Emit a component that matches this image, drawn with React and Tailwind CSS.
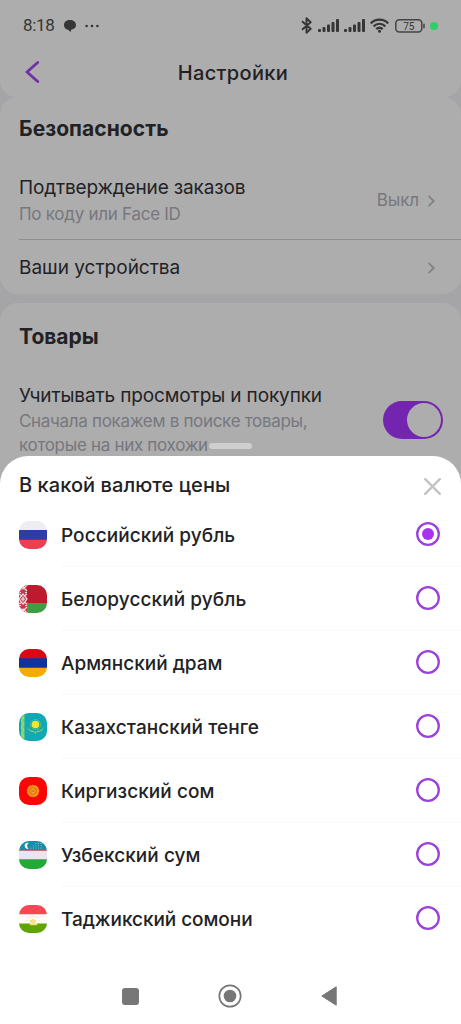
import React from 'react';

function StatusBar() {
  return (
    <div className="flex h-[51px] items-center pl-[23px] pr-[23px] text-[#363636]">
      <span className="w-[41px] pt-px font-['Roboto',sans-serif] text-[17px] tracking-[-0.3px]">8:18</span>
      <svg className="h-3 w-3" viewBox="0 0 12 12" fill="currentColor">
        <path d="M6 0C2.500 0 0 2 0 4.900c0 2.600 1.600 4.300 4 4.800L6.600 12l.8-2.600C10.400 9 12 7.400 12 5 12 2 9.400 0 6 0z" />
      </svg>
      <svg className="ml-[9px] h-3 w-[14px]" viewBox="0 0 14 12" fill="currentColor">
        <circle cx="1.600" cy="6" r="1.300" /><circle cx="7" cy="6" r="1.300" /><circle cx="12.400" cy="6" r="1.300" />
      </svg>
      <svg className="ml-auto h-[17px] w-[11px]" viewBox="0 0 11 17" fill="none" stroke="currentColor" strokeWidth="1.900">
        <path d="M1 4.300l8.700 7.500-4.200 4V1.200l4.200 4L1 12.700" strokeLinejoin="round" />
      </svg>
      <Signal className="ml-[6px]" />
      <Signal className="ml-[5px]" />
      <svg className="ml-[5px] h-[15px] w-[19px]" viewBox="0 0 19 15" fill="none" stroke="currentColor" strokeWidth="2.300">
        <path d="M.8 5.300c5-4.800 12.400-4.800 17.400 0M3.600 8.400c3.500-3.300 8.300-3.300 11.800 0M6.300 11.200c1.900-1.800 4.500-1.800 6.400 0" />
        <circle cx="9.500" cy="13.200" r="1.500" fill="currentColor" stroke="none" />
      </svg>
      <svg className="ml-[6px] h-[14px] w-[30px]" viewBox="0 0 30 14">
        <rect x=".8" y=".8" width="26" height="12.200" rx="3.500" fill="none" stroke="#444" strokeWidth="1.500" />
        <path d="M29 4.800v4.400" stroke="#444" strokeWidth="1.500" />
        <text x="13.800" y="10.600" textAnchor="middle" fill="#363636" className="font-['Roboto',sans-serif] text-[10px]">75</text>
      </svg>
      <div className="ml-[5px] h-2 w-2 rounded-full bg-[#2fce67]" />
    </div>
  );
}

function Signal({ className }) {
  return (
    <svg className={`h-[13px] w-[21px] ${className}`} viewBox="0 0 21 13" fill="currentColor">
      <rect x="0" y="10" width="3" height="3" rx="1" />
      <rect x="4.500" y="8" width="3" height="5" rx="1" />
      <rect x="9" y="5.500" width="3" height="7.500" rx="1" />
      <rect x="13.500" y="3" width="3" height="10" rx="1" />
      <rect x="18" y="0" width="3" height="13" rx="1" />
    </svg>
  );
}

function Chevron() {
  return (
    <svg className="h-3 w-[7px]" viewBox="0 0 7 12" fill="none" stroke="#838387" strokeWidth="1.800" strokeLinecap="round" strokeLinejoin="round">
      <path d="M1 1.300l4.700 4.700L1 10.700" />
    </svg>
  );
}

function Radio({ checked }) {
  return (
    <svg className="mb-px h-6 w-6" viewBox="0 0 24 24">
      <circle cx="12" cy="12" r="10.800" fill="none" stroke="#9a42dc" strokeWidth="2.300" />
      {checked && <circle cx="12" cy="12" r="6" fill="#a733f1" />}
    </svg>
  );
}

function Flag({ code }) {
  return (
    <svg className="h-7 w-7 shrink-0 rounded-[10px]" viewBox="0 0 28 28">
      {code === 'ru' && <><path fill="#eeeef2" d="M0 0h28v10H0z" /><path fill="#2c3da5" d="M0 9h28v10H0z" /><path fill="#ec3f51" d="M0 18.700h28V28H0z" /></>}
      {code === 'by' && (
        <>
          <path fill="#bd1a30" d="M0 0h28v18H0z" /><path fill="#3d9e42" d="M0 18h28v10H0z" />
          <path fill="#c43a4c" d="M0 0h8v28H0z" />
          <g fill="none" stroke="#f6e8e9" strokeWidth="1.200">
            <path d="M4 9l4 5-4 5-4-5zM0 0l4 4 4-4M0 6l4-4 4 4M0 28l4-4 4 4M0 22l4 4 4-4M0 9l3 2M8 9l-3 2M0 19l3-2M8 19l-3-2" />
            <path d="M4 11.500v5M1.800 14h4.400M0 7.500h2M6 7.500h2M0 20.500h2M6 20.500h2" />
          </g>
        </>
      )}
      {code === 'am' && <><path fill="#dc0614" d="M0 0h28v10H0z" /><path fill="#0d33a3" d="M0 9.200h28V19H0z" /><path fill="#f5aa04" d="M0 18.800h28V28H0z" /></>}
      {code === 'kz' && (
        <>
          <path fill="#13a8b5" d="M0 0h28v28H0z" />
          <path fill="#73cf79" d="M2 0h3.500v28H2z" />
          <path d="M2.500 2l2.500 3-2.500 3L5 11l-2.500 3L5 17l-2.500 3L5 23l-2.500 3" fill="none" stroke="#c0e051" strokeWidth=".8" />
          <circle cx="16.500" cy="11.500" r="5" fill="none" stroke="#9bd965" strokeWidth="1" strokeDasharray=".8 1" />
          <circle cx="16.500" cy="11.500" r="3.800" fill="#f4e72b" />
          <path d="M8.500 13.800c.5 4.500 4 5 7 5.500l1 1.500 1-1.500c3-.5 6.500-1 7-5.500-.8 2.800-3 3.900-5 3.900l-3 1.200-3-1.200c-2 0-4.200-1.100-5-3.900z" fill="#b3d944" />
        </>
      )}
      {code === 'kg' && (
        <>
          <path fill="#fb0606" d="M0 0h28v28H0z" />
          <circle cx="14" cy="14" r="5.500" fill="#f59416" stroke="#f8a51c" strokeWidth="1.500" strokeDasharray="1 .5" />
          <circle cx="14" cy="14" r="3.300" fill="#f6aa20" stroke="#d6501a" strokeWidth=".7" />
          <path d="M11.500 12.500c2 1 3 2 5 3M16.500 12.500c-2 1-3 2-5 3" fill="none" stroke="#d6501a" strokeWidth=".6" />
        </>
      )}
      {code === 'uz' && (
        <>
          <path fill="#168eaa" d="M0 0h28v9.500H0z" /><path fill="#d35d6c" d="M0 9.300h28v9.700H0z" /><path fill="#e9e6f0" d="M0 10h28v8.200H0z" /><path fill="#22aa38" d="M0 18.800h28V28H0z" />
          <path d="M9.700 2a3 3 0 1 0 0 5.600 3.200 3.200 0 0 1 0-5.600z" fill="#fff" />
          <g fill="#8ec8d8"><circle cx="12" cy="7" r=".55" /><circle cx="14.500" cy="7" r=".55" /><circle cx="17" cy="7" r=".55" /><circle cx="19.500" cy="7" r=".55" /><circle cx="22" cy="7" r=".55" /><circle cx="14.500" cy="4.700" r=".55" /><circle cx="17" cy="4.700" r=".55" /><circle cx="19.500" cy="4.700" r=".55" /><circle cx="22" cy="4.700" r=".55" /><circle cx="17" cy="2.400" r=".55" /><circle cx="19.500" cy="2.400" r=".55" /><circle cx="22" cy="2.400" r=".55" /></g>
        </>
      )}
      {code === 'tj' && (
        <>
          <path fill="#f94754" d="M0 0h28v9.400H0z" /><path fill="#fdfcf8" d="M0 9.400h28v9.200H0z" /><path fill="#5fa501" d="M0 18.600h28V28H0z" />
          <path d="M11 18v2h7v-2M12 17.500l-.8-2.500 1.800 1 1-2 1 2 1.800-1-.8 2.500z" fill="#fbe6a3" stroke="#e8cd58" strokeWidth=".6" />
          <g fill="#f2d89a"><circle cx="8" cy="15.500" r=".6" /><circle cx="9" cy="12.700" r=".6" /><circle cx="11.200" cy="11.800" r=".6" /><circle cx="14" cy="11.400" r=".6" /><circle cx="16.800" cy="11.800" r=".6" /><circle cx="19" cy="12.700" r=".6" /><circle cx="20" cy="15.500" r=".6" /></g>
        </>
      )}
    </svg>
  );
}

const currencies = [
  { code: 'ru', name: 'Российский рубль', tracking: 'tracking-[0.05px]' },
  { code: 'by', name: 'Белорусский рубль', tracking: 'tracking-[0.08px]' },
  { code: 'am', name: 'Армянский драм', tracking: 'tracking-[0px]' },
  { code: 'kz', name: 'Казахстанский тенге', tracking: 'tracking-[0.08px]' },
  { code: 'kg', name: 'Киргизский сом', tracking: 'tracking-[0.06px]' },
  { code: 'uz', name: 'Узбекский сум', tracking: 'tracking-[0.06px]' },
  { code: 'tj', name: 'Таджикский сомони', tracking: 'tracking-[-0.05px]' },
];

function CurrencySheet() {
  return (
    <section className="relative flex h-[568px] shrink-0 flex-col rounded-t-[28px] bg-white">
      <div className="absolute -top-[13px] left-[209px] h-[6px] w-[43px] rounded-full bg-[#cfcfd0]" />
      <header className="flex h-[47px] items-center justify-between pl-[19px] pr-5 pt-[11px]">
        <h2 className="text-[20px] font-medium tracking-[0.06px]">В какой валюте цены</h2>
        <svg className="mt-[2px] h-[17px] w-[17px]" viewBox="0 0 17 17" stroke="#c3c3c8" strokeWidth="2.400" strokeLinecap="round"><path d="M1.200 1.200l14.600 14.600M15.800 1.200L1.200 15.800" /></svg>
      </header>
      <ul>
        {currencies.map(({ code, name, tracking }, i) => (
          <li key={code} className="flex h-16 items-center pl-[19px]">
            <Flag code={code} />
            <div className={`ml-[14px] flex h-16 flex-1 items-center justify-between border-b pr-[21px] ${i < 6 ? 'border-[#f9f9f9]' : 'border-transparent'}`}>
              <span className={`pt-[3px] text-[19px] font-medium ${tracking}`}>{name}</span>
              <Radio checked={i === 0} />
            </div>
          </li>
        ))}
      </ul>
      <nav className="mt-[25px] flex h-10 items-center pl-[122px] text-[#777]">
        <span className="h-[17px] w-[17px] rounded-[3px] bg-[#777]" />
        <svg className="ml-[79px] h-6 w-6" viewBox="0 0 24 24"><circle cx="12" cy="12" r="10.700" fill="none" stroke="currentColor" strokeWidth="1.700" /><circle cx="12" cy="12" r="6.300" fill="currentColor" /></svg>
        <svg className="ml-[79px] h-5 w-4" viewBox="0 0 16 20"><path d="M15.200.8v18.400L.8 10z" fill="currentColor" stroke="currentColor" strokeWidth="1" strokeLinejoin="round" /></svg>
      </nav>
    </section>
  );
}

export default function App() {
  return (
    <main className="flex h-[1024px] w-[461px] flex-col overflow-hidden bg-[#a5a5a8] font-['Inter',sans-serif] text-[#222225]">
      <header className="h-[97px] shrink-0 rounded-b-[16px] bg-[#adadad]">
        <StatusBar />
        <div className="relative flex h-[44px] items-center justify-center pl-[5px]">
          <svg className="absolute left-[25px] top-[10px] h-[22px] w-[15px]" viewBox="0 0 15 22" fill="none" stroke="#7030a8" strokeWidth="2.800" strokeLinecap="round" strokeLinejoin="round"><path d="M12.700 1.500L2 11l10.700 9.500" /></svg>
          <h1 className="text-[20px] font-medium leading-6 tracking-[0.35px]">Настройки</h1>
        </div>
      </header>
      <section className="h-[197px] shrink-0 rounded-[18px] bg-[#adadad] pl-[19px] pt-[18px]">
        <h2 className="text-[21px] font-bold leading-[28px] tracking-[0.06px]">Безопасность</h2>
        <div className="mt-[24px] flex h-[73px] justify-between border-b border-[#8d8d90] pr-[26px]">
          <div className="pt-[8px]">
            <div className="text-[19px] leading-[26px] tracking-[-0.15px]">Подтверждение заказов</div>
            <div className="text-[17px] leading-[26px] tracking-[-0.27px] text-[#77777e]">По коду или Face ID</div>
          </div>
          <div className="flex h-[67px] items-center gap-[9px] text-[17px] tracking-[-0.1px] text-[#77777e]"><span>Выкл</span><Chevron /></div>
        </div>
        <div className="flex h-[54px] items-center justify-between pr-[26px] pt-[2px] text-[19px]"><span>Ваши устройства</span><Chevron /></div>
      </section>
      <section className="-mb-7 mt-[9px] h-[181px] shrink-0 rounded-t-[18px] bg-[#adadad] pl-[19px] pt-[20px]">
        <h2 className="text-[21px] font-bold leading-[28px]">Товары</h2>
        <div className="flex justify-between pr-[18px] pt-[32px]">
          <div>
            <div className="text-[19px] leading-[26px] tracking-[-0.12px]">Учитывать просмотры и покупки</div>
            <div className="text-[17px] leading-[24px] tracking-[-0.31px] text-[#77777e]">Сначала покажем в поиске товары,<br />которые на них похожи</div>
          </div>
          <div className="mt-[18px] flex h-[38px] w-[60px] items-center justify-end rounded-full bg-[#7425b0] pr-[2px]">
            <div className="h-[34px] w-[34px] rounded-full bg-[#adadad]" />
          </div>
        </div>
      </section>
      <CurrencySheet />
    </main>
  );
}
